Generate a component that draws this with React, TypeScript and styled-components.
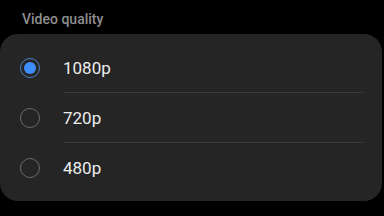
import React, { useState } from 'react';
import styled, { createGlobalStyle } from 'styled-components';

const GlobalStyle = createGlobalStyle`
  html, body {
    margin: 0;
    padding: 0;
    background: #000;
    width: 384px;
    height: 216px;
    overflow: hidden;
  }
  * { box-sizing: border-box; }
`;

const Page = styled.div`
  width: 384px;
  height: 216px;
  background: #000;
  font-family: 'Roboto', 'Noto Sans', sans-serif;
  display: flex;
  flex-direction: column;
`;

const SectionTitle = styled.div`
  padding: 11px 0 0 22px;
  height: 34px;
  font-size: 14px;
  font-weight: 500;
  color: #8e8e8e;
`;

const Card = styled.div`
  margin: 0 2px 0 0;
  background: #252525;
  border-radius: 18px;
  padding: 9px 0 8px 0;
  display: flex;
  flex-direction: column;
`;

const Row = styled.label`
  height: 50px;
  display: flex;
  align-items: center;
  cursor: pointer;
`;

const RadioSlot = styled.div`
  width: 63px;
  padding-left: 20px;
  display: flex;
  align-items: center;
`;

const Radio = styled.div<{ $checked: boolean }>`
  width: 20px;
  height: 20px;
  border-radius: 50%;
  border: 1.5px solid ${({ $checked }) => ($checked ? '#4f7fc0' : '#6b6b6b')};
  display: flex;
  align-items: center;
  justify-content: center;

  &::after {
    content: '';
    width: 12px;
    height: 12px;
    border-radius: 50%;
    background: #3f8cfb;
    display: ${({ $checked }) => ($checked ? 'block' : 'none')};
  }
`;

const Body = styled.div<{ $divider: boolean }>`
  flex: 1;
  height: 100%;
  margin-right: 19px;
  display: flex;
  align-items: center;
  border-bottom: 1.5px solid ${({ $divider }) => ($divider ? '#3a3a3a' : 'transparent')};
`;

const Label = styled.span`
  font-size: 17px;
  color: #ececec;
  margin-top: 1px;
`;

const options = ['1080p', '720p', '480p'];

export default function App() {
  const [value, setValue] = useState('1080p');
  return (
    <Page>
      <GlobalStyle />
      <SectionTitle>Video quality</SectionTitle>
      <Card>
        {options.map((opt, i) => (
          <Row key={opt} onClick={() => setValue(opt)}>
            <RadioSlot>
              <Radio $checked={value === opt} />
            </RadioSlot>
            <Body $divider={i < options.length - 1}>
              <Label>{opt}</Label>
            </Body>
          </Row>
        ))}
      </Card>
    </Page>
  );
}
